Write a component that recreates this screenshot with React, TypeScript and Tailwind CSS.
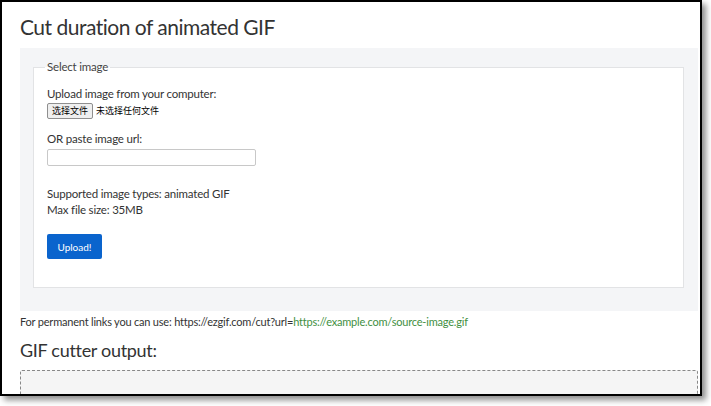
import React from 'react';

const font = { fontFamily: '"Segoe UI", Lato, "Noto Sans CJK SC", sans-serif' };

const App: React.FC = () => {
  return (
    <div className="w-[711px] h-[406px] bg-white overflow-hidden" style={font}>
      <div className="w-[702px] h-[396px] border-2 border-black bg-white overflow-hidden shadow-[4px_4px_6px_rgba(0,0,0,0.45)] pl-[18px] pr-[2px] text-[#333]">
        <h1 className="pt-[11px] text-[21px] leading-[28px] tracking-[-0.5px] font-normal text-[#333]">Cut duration of animated GIF</h1>

        <div className="mt-[7px] bg-[#f4f5f7] pt-[11px] pr-[14px] pb-[23px] pl-[13px]">
          <fieldset className="border border-[#e2e3e5] bg-white px-[13px] pb-[28px] text-[11.5px] tracking-[-0.2px] leading-[16px]">
            <legend className="px-[2px] -ml-[2px] text-[#444]">Select image</legend>

            <div className="pt-[11px]">Upload image from your computer:</div>
            <div className="flex items-center gap-[3px] h-[17px] text-[9px] tracking-normal">
              <span className="h-[16px] px-[4px] flex items-center border border-[#8f8f8f] bg-[#efefef] rounded-[2px] text-black leading-none">选择文件</span>
              <span className="text-black">未选择任何文件</span>
            </div>

            <div className="mt-[12px]">OR paste image url:</div>
            <input type="text" className="mt-[2px] block w-[209px] h-[17px] border border-[#c8c8c8] rounded-[2px] bg-white" />

            <div className="mt-[20px]">Supported image types: animated GIF</div>
            <div>Max file size: 35MB</div>

            <button className="mt-[16px] w-[55px] h-[25px] bg-[#0a64cd] rounded-[2px] text-white text-[10px] tracking-normal">Upload!</button>
          </fieldset>
        </div>

        <p className="mt-[4px] text-[11px] leading-[14px] tracking-[-0.2px]">
          For permanent links you can use: https://ezgif.com/cut?url=<span className="text-[#3f8f3f]">https://example.com/source-image.gif</span>
        </p>

        <h2 className="mt-[9px] text-[18px] leading-[24px] tracking-[-0.3px] font-normal">GIF cutter output:</h2>

        <div className="mt-[8px] h-[30px] border border-dashed border-[#888] rounded-[2px] bg-[#f5f5f5]"></div>
      </div>
    </div>
  );
};

export default App;
